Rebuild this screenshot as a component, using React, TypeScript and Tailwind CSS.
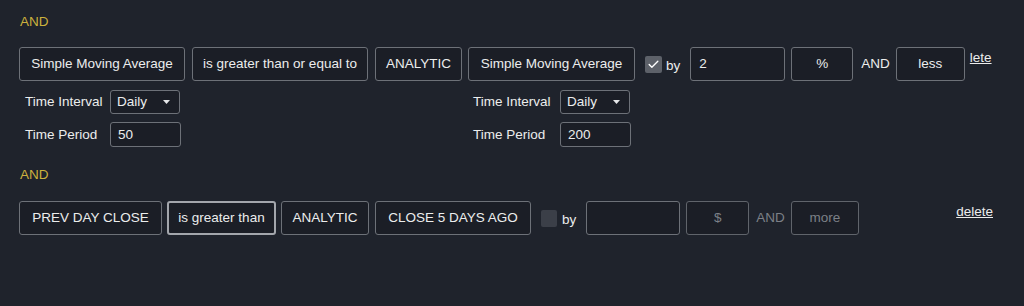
import { Check } from 'lucide-react'

const font = { fontFamily: '"Liberation Sans", Arial, sans-serif' }

function Box({ label, w, focus }: { label: string; w: string; focus?: boolean }) {
  return (
    <div
      className={`${w} h-[34px] flex items-center justify-center rounded-[3px] bg-[#1b1e26] text-[#eceded] ${
        focus ? 'border-2 border-[#a3a6ac]' : 'border border-[#6d7178]'
      }`}
    >
      {label}
    </div>
  )
}

function Params({ interval, period, labelW }: { interval: string; period: string; labelW: string }) {
  return (
    <div className="mt-[9px] flex flex-col gap-[8px]">
      <div className="flex items-center">
        <span className={`${labelW} text-[#eceded]`}>Time Interval</span>
        <div className="w-[70px] h-[24px] rounded-[3px] border border-[#6d7178] bg-[#1b1e26] flex items-center justify-between pl-[6px] pr-[9px] text-[#eceded]">
          <span>{interval}</span>
          <svg width="7" height="4" viewBox="0 0 7 4">
            <path d="M0 0 L7 0 L3.5 4 Z" fill="#e6e7e9" />
          </svg>
        </div>
      </div>
      <div className="flex items-center">
        <span className={`${labelW} text-[#eceded]`}>Time Period</span>
        <div className="w-[71px] h-[25px] rounded-[3px] border border-[#6d7178] bg-[#1b1e26] flex items-center pl-[7px] text-[#eceded]">
          {period}
        </div>
      </div>
    </div>
  )
}

export default function App() {
  return (
    <main className="w-[1024px] h-[306px] bg-[#1f232c] pl-[19px] pt-[14px] text-[13.5px] leading-4" style={font}>
      <p className="text-[#cbb13d] pl-px">AND</p>

      <div className="mt-[17px] flex items-start">
        <div className="flex flex-col">
          <Box label="Simple Moving Average" w="w-[166px]" />
          <div className="pl-[6px]">
            <Params interval="Daily" period="50" labelW="w-[85px]" />
          </div>
        </div>
        <div className="ml-[7px]">
          <Box label="is greater than or equal to" w="w-[176px]" />
        </div>
        <div className="ml-[7px]">
          <Box label="ANALYTIC" w="w-[87px]" />
        </div>
        <div className="ml-[6px] flex flex-col">
          <Box label="Simple Moving Average" w="w-[167px]" />
          <div className="pl-[5px]">
            <Params interval="Daily" period="200" labelW="w-[87px]" />
          </div>
        </div>
        <div className="ml-[10px] h-[34px] flex items-center">
          <div className="w-[17px] h-[17px] rounded-[2px] bg-[#5d6169] flex items-center justify-center">
            <Check size={13} strokeWidth={2.5} className="text-white" />
          </div>
          <span className="ml-[4px] text-[#eceded] mt-[3px]">by</span>
        </div>
        <div className="ml-[10px] w-[95px] h-[34px] rounded-[3px] border border-[#6d7178] bg-[#1b1e26] flex items-center pl-[8px] text-[#eceded]">
          2
        </div>
        <div className="ml-[6px]">
          <Box label="%" w="w-[62px]" />
        </div>
        <div className="ml-[8px] h-[34px] flex items-center text-[#eceded]">AND</div>
        <div className="ml-[6px]">
          <Box label="less" w="w-[69px]" />
        </div>
        <a className="ml-[5px] mt-[3px] text-[#eceded] underline">lete</a>
      </div>

      <p className="mt-[20px] text-[#cbb13d] pl-px">AND</p>

      <div className="mt-[18px] flex items-start pr-[31px]">
        <Box label="PREV DAY CLOSE" w="w-[143px]" />
        <div className="ml-[5px]">
          <Box label="is greater than" w="w-[109px]" focus />
        </div>
        <div className="ml-[5px]">
          <Box label="ANALYTIC" w="w-[88px]" />
        </div>
        <div className="ml-[6px]">
          <Box label="CLOSE 5 DAYS AGO" w="w-[156px]" />
        </div>
        <div className="ml-[10px] h-[34px] flex items-center">
          <div className="w-[16px] h-[17px] rounded-[2px] bg-[#3b3f48]" />
          <span className="ml-[5px] text-[#eceded] mt-[3px]">by</span>
        </div>
        <div className="ml-[10px] w-[94px] h-[34px] rounded-[3px] border border-[#6d7178] bg-[#1b1e26]" />
        <div className="ml-[6px] w-[63px] h-[34px] rounded-[3px] border border-[#60646b] bg-[#1b1e26] flex items-center justify-center text-[#7c8087]">
          $
        </div>
        <div className="ml-[7px] h-[34px] flex items-center text-[#7c8087]">AND</div>
        <div className="ml-[6px] w-[68px] h-[34px] rounded-[3px] border border-[#60646b] bg-[#1b1e26] flex items-center justify-center text-[#7c8087]">
          more
        </div>
        <a className="ml-auto mt-[3px] text-[#eceded] underline">delete</a>
      </div>
    </main>
  )
}
